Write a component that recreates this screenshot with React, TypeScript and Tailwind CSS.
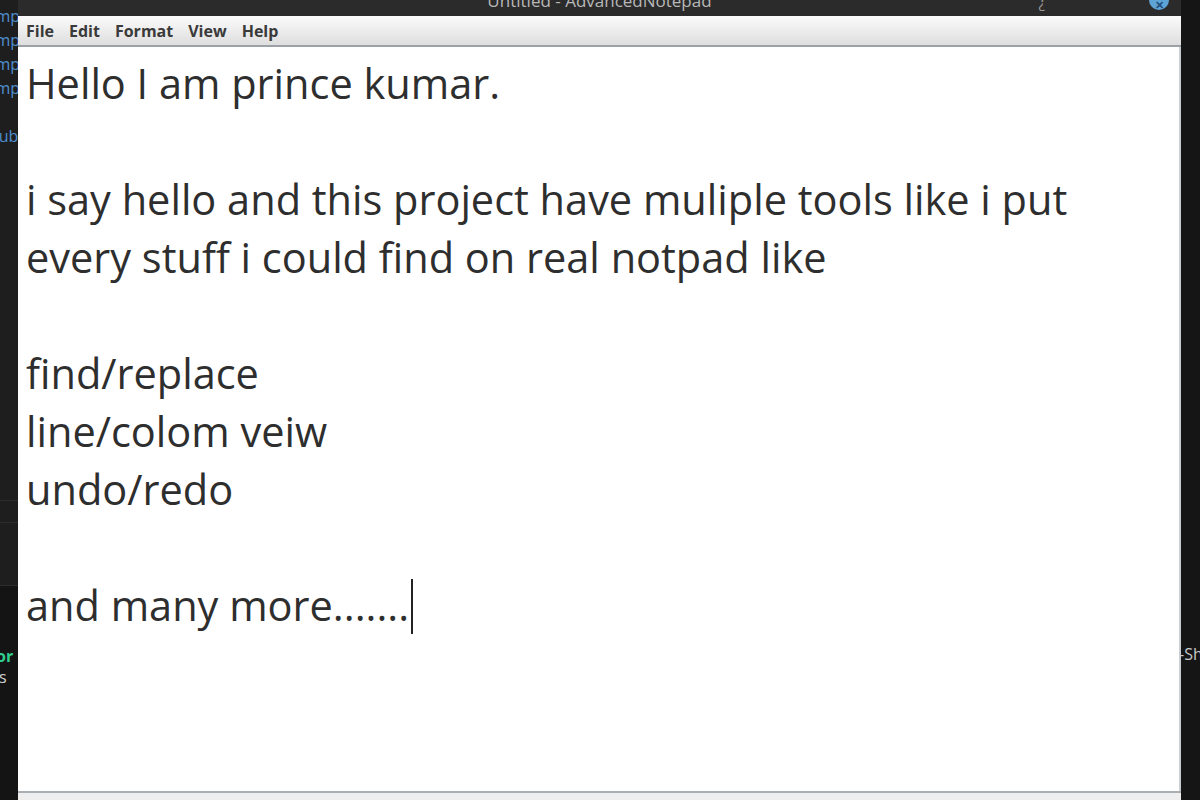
import React from "react";

const lines = [
  "Hello I am prince kumar.",
  "",
  "i say hello and this project have muliple tools like i put",
  "every stuff i could find on real notpad like",
  "",
  "find/replace",
  "line/colom veiw",
  "undo/redo",
  "",
  "and many more.......",
];

export default function App() {
  const font = { fontFamily: '"Open Sans", "Noto Sans", sans-serif' };
  return (
    <div className="flex h-[800px] w-[1200px] overflow-hidden bg-[#1b1b1b]" style={font}>
      {/* left editor strip behind the window */}
      <div className="flex w-[18px] shrink-0 flex-col overflow-hidden">
        <div className="h-[500px] bg-[#1e1e1e] text-[16px] leading-[24px] text-[#4f8fd0]">
          <div className="-ml-[9px] mt-[4px] whitespace-nowrap">
            <div>Imp</div>
            <div>Imp</div>
            <div>Imp</div>
            <div>Imp</div>
            <div>&nbsp;</div>
            <div>sub</div>
          </div>
        </div>
        <div className="h-[22px] border-t border-[#2c2c2c] bg-[#1e1e1e]" />
        <div className="h-[64px] border-y border-[#2c2c2c] bg-[#1e1e1e]" />
        <div className="flex-1 bg-[#141414] pt-[60px] text-[16px] leading-[21px]">
          <div className="-ml-[4px] whitespace-nowrap font-bold text-[#2fd08f]">or</div>
          <div className="-ml-[1px] whitespace-nowrap text-[#d0d0d0]">s</div>
        </div>
      </div>

      {/* window */}
      <div className="flex w-[1163px] shrink-0 flex-col">
        <div className="relative h-4 overflow-hidden bg-[#2b2b2b]">
          <div className="-mt-[12px] text-center text-[17px] text-[#b8b8b8]">Untitled - AdvancedNotepad</div>
          <div className="absolute right-[136px] top-[-9px] text-[15px] text-[#9a9a9a]">¿</div>
          <div className="absolute right-[12px] top-[-10px] flex h-[20px] w-[20px] items-center justify-center rounded-full bg-[#5ea3d6]">
            <span className="mt-[8px] text-[11px] font-bold leading-none text-[#1f4f7a]">✕</span>
          </div>
        </div>
        <div className="flex h-[31px] items-center gap-[15px] border-b-2 border-[#9ba1a6] bg-gradient-to-b from-[#fbfbfb] to-[#dedede] pl-[8px] text-[16px] font-bold text-[#3a3a3a]">
          <span>File</span>
          <span>Edit</span>
          <span>Format</span>
          <span>View</span>
          <span>Help</span>
        </div>
        <div className="flex-1 border-r-2 border-[#c9cdd1] bg-white pl-[8px] pt-[7px] text-[41.5px] leading-[58px] text-[#2e2e2e]">
          {lines.map((l, i) => (
            <div key={i} className="h-[58px] whitespace-pre">
              {l}
              {i === lines.length - 1 && (
                <span className="ml-[2px] inline-block h-[55px] w-[1.5px] translate-y-[3px] bg-[#222] align-top" />
              )}
            </div>
          ))}
        </div>
        <div className="h-[9px] border-t-2 border-[#a9aeb3] bg-[#eeeeee]" />
      </div>

      {/* right strip */}
      <div className="flex-1 overflow-hidden bg-[#151515] pt-[642px] text-[16px] text-[#c8c8c8]">
        <div className="-ml-[2px] whitespace-nowrap">-Sh</div>
      </div>
    </div>
  );
}
